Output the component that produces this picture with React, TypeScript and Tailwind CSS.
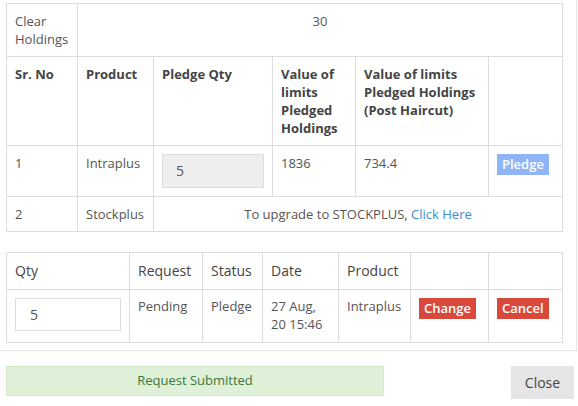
export default function App() {
  const td = "border border-[#dddddd] px-2 py-2 align-top";
  return (
    <div
      className="h-[406px] w-[578px] overflow-hidden bg-white text-[13px] text-[#555]"
      style={{ fontFamily: '"Open Sans", "Liberation Sans", sans-serif' }}
    >
      <div className="h-[351px] w-[577px] border-r border-b border-[#e5e5e5] pt-[3px] pl-[6px]">
        <table className="w-[556px] table-fixed border-collapse leading-[18px]">
          <colgroup>
            <col className="w-[71px]" />
            <col className="w-[76px]" />
            <col className="w-[119px]" />
            <col className="w-[83px]" />
            <col className="w-[133px]" />
            <col className="w-[74px]" />
          </colgroup>
          <tbody>
            <tr className="h-[53px]">
              <td className={td}>Clear Holdings</td>
              <td className={`${td} text-center`} colSpan={5}>
                30
              </td>
            </tr>
            <tr className="h-[89px] font-bold text-[#444]">
              <td className={td}>Sr. No</td>
              <td className={td}>Product</td>
              <td className={td}>Pledge Qty</td>
              <td className={td}>Value of limits Pledged Holdings</td>
              <td className={td}>Value of limits Pledged Holdings (Post Haircut)</td>
              <td className={td}></td>
            </tr>
            <tr className="h-[51px]">
              <td className={td}>1</td>
              <td className={td}>Intraplus</td>
              <td className={td}>
                <div className="flex h-[34px] w-[102px] items-center border border-[#dddddd] bg-[#eeeeee] px-[13px] text-[14px]">
                  5
                </div>
              </td>
              <td className={td}>1836</td>
              <td className={td}>734.4</td>
              <td className={td}>
                <span className="inline-block h-[21px] bg-[#8fb5f7] px-[5px] leading-[21px] font-semibold text-white">
                  Pledge
                </span>
              </td>
            </tr>
            <tr className="h-[35px]">
              <td className={td}>2</td>
              <td className={td}>Stockplus</td>
              <td className={`${td} text-center`} colSpan={4}>
                To upgrade to STOCKPLUS, <span className="text-[#3c8dd0]">Click Here</span>
              </td>
            </tr>
          </tbody>
        </table>

        <table className="mt-[20px] w-[556px] table-fixed border-collapse">
          <colgroup>
            <col className="w-[123px]" />
            <col className="w-[73px]" />
            <col className="w-[60px]" />
            <col className="w-[76px]" />
            <col className="w-[72px]" />
            <col className="w-[78px]" />
            <col className="w-[74px]" />
          </colgroup>
          <tbody>
            <tr className="h-[37px] text-[14px] leading-[20px] text-[#444]">
              <td className={td}>Qty</td>
              <td className={td}>Request</td>
              <td className={td}>Status</td>
              <td className={td}>Date</td>
              <td className={td}>Product</td>
              <td className={td}></td>
              <td className={td}></td>
            </tr>
            <tr className="h-[53px] leading-[17.5px]">
              <td className={td}>
                <div className="flex h-[33px] w-[106px] items-center border border-[#dddddd] bg-white px-[14px] text-[14px]">
                  5
                </div>
              </td>
              <td className={td}>Pending</td>
              <td className={td}>Pledge</td>
              <td className={td}>27 Aug, 20 15:46</td>
              <td className={td}>Intraplus</td>
              <td className={td}>
                <span className="inline-block h-[21px] bg-[#d9493b] px-[5px] leading-[21px] font-semibold text-white">
                  Change
                </span>
              </td>
              <td className={td}>
                <span className="inline-block h-[21px] bg-[#d9493b] px-[5px] leading-[21px] font-semibold text-white">
                  Cancel
                </span>
              </td>
            </tr>
          </tbody>
        </table>
      </div>

      <div className="flex items-start justify-between pt-[15px] pr-[4px] pl-[6px]">
        <div className="flex h-[30px] w-[378px] items-center justify-center border border-[#d6e9c6] bg-[#dff0d8] text-[#3c763d]">
          Request Submitted
        </div>
        <div className="flex h-[33px] w-[63px] items-center justify-center bg-[#e5e5e5] text-[14px] text-[#444]">
          Close
        </div>
      </div>
    </div>
  );
}
